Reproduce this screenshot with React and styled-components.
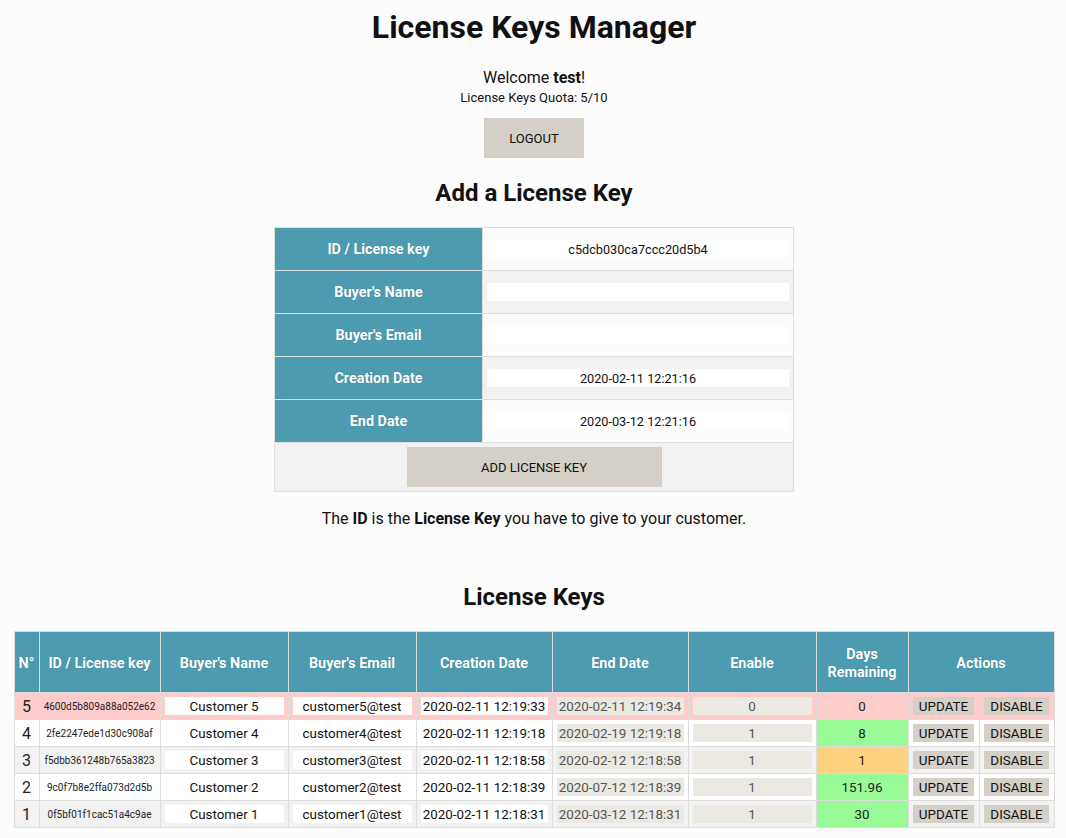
import React from 'react';
import styled, { createGlobalStyle } from 'styled-components';

const GlobalStyle = createGlobalStyle`
	body {
		margin: 0;
		background: #fcfcfc;
		font-family: Roboto, "Liberation Sans", sans-serif;
		color: #111;
	}
`;

const Page = styled.div`
	display: flex;
	flex-direction: column;
	align-items: center;
	padding: 0 0 10px 2px;
`;

const Title = styled.h1`
	margin: 9px 0 0;
	font-size: 32px;
	line-height: 37px;
	font-weight: 700;
`;

const Welcome = styled.div`
	margin-top: 22px;
	font-size: 16px;
	line-height: 19px;
`;

const Quota = styled.div`
	margin-top: 3px;
	font-size: 13px;
	line-height: 15px;
`;

const Button = styled.button`
	border: none;
	background: #d4cfc7;
	color: #111;
	font-family: Roboto, "Liberation Sans", sans-serif;
	font-size: ${p => (p.$small ? '13.4px' : '13px')};
	text-transform: uppercase;
	cursor: pointer;
	width: ${p => p.$width || 'auto'};
	height: ${p => p.$height || '18px'};
	padding: ${p => (p.$small ? '0 6px' : '0')};
	margin-top: ${p => p.$mt || '0'};
`;

const SubTitle = styled.h2`
	margin: ${p => p.$mt} 0 0;
	font-size: 24px;
	line-height: 28px;
	font-weight: 700;
`;

const FormTable = styled.table`
	margin-top: 20px;
	width: 520px;
	border-collapse: collapse;
	table-layout: fixed;
	border: 1px solid #ddd;

	tr:nth-child(odd) { background: #fcfcfc; }
	tr:nth-child(even) { background: #f2f2f2; }
`;

const Label = styled.th`
	width: 207px;
	height: 42px;
	padding: 0;
	background: #4d9bb0;
	color: #fff;
	font-size: 14.4px;
	font-weight: 700;
	text-shadow: 0 0 1px rgba(0, 0, 0, 0.25);
	border: 1px solid #ddd;
	border-left: none;
`;

const ValueCell = styled.td`
	padding: 0 4px;
	border: 1px solid #ddd;
`;

const Field = styled.input`
	display: block;
	box-sizing: border-box;
	width: 100%;
	height: 18px;
	border: none;
	padding: 0;
	outline: none;
	text-align: center;
	font-family: Roboto, "Liberation Sans", sans-serif;
	font-size: ${p => p.$size || '13.4px'};
	color: ${p => (p.$muted ? '#555' : '#111')};
	background: ${p => (p.$muted ? '#ebe9e2' : '#fff')};
`;

const ButtonCell = styled.td`
	padding: 4px 0 4px;
	text-align: center;
	background: #f2f2f2;
`;

const Note = styled.p`
	margin: 17px 0 0;
	font-size: 16px;
	line-height: 19px;
`;

const KeysTable = styled.table`
	margin-top: 20px;
	width: 1041px;
	border-collapse: collapse;
	table-layout: fixed;
	border: 1px solid #ddd;
`;

const Head = styled.th`
	background: #4d9bb0;
	color: #fff;
	font-size: 14.4px;
	font-weight: 700;
	line-height: 18px;
	height: 61px;
	box-sizing: border-box;
	padding: 3px ${p => (p.$tight ? '0' : '4px')} 0;
	text-shadow: 0 0 1px rgba(0, 0, 0, 0.25);
	border: 1px solid #ddd;
`;

const Row = styled.tr`
	background: ${p => (p.$expired ? '#ffcccc' : p.$odd ? '#f2f2f2' : '#fff')};
`;

const Cell = styled.td`
	height: 27px;
	padding: 0 ${p => (p.$tight ? '0' : '4px')};
	box-sizing: border-box;
	border: 1px solid #ddd;
	text-align: center;
	font-size: ${p => p.$size || '13.4px'};
	color: #222;
	background: ${p => p.$bg || 'transparent'};
`;

const keys = [
	{ n: 5, id: '4600d5b809a88a052e62', name: 'Customer 5', email: 'customer5@test', created: '2020-02-11 12:19:33', end: '2020-02-11 12:19:34', enable: 0, days: '0', expired: true },
	{ n: 4, id: '2fe2247ede1d30c908af', name: 'Customer 4', email: 'customer4@test', created: '2020-02-11 12:19:18', end: '2020-02-19 12:19:18', enable: 1, days: '8' },
	{ n: 3, id: 'f5dbb361248b765a3823', name: 'Customer 3', email: 'customer3@test', created: '2020-02-11 12:18:58', end: '2020-02-12 12:18:58', enable: 1, days: '1' },
	{ n: 2, id: '9c0f7b8e2ffa073d2d5b', name: 'Customer 2', email: 'customer2@test', created: '2020-02-11 12:18:39', end: '2020-07-12 12:18:39', enable: 1, days: '151.96' },
	{ n: 1, id: '0f5bf01f1cac51a4c9ae', name: 'Customer 1', email: 'customer1@test', created: '2020-02-11 12:18:31', end: '2020-03-12 12:18:31', enable: 1, days: '30' },
];

const daysColor = (k) => {
	if (k.expired) return 'transparent';
	if (Number(k.days) <= 1) return '#ffd280';
	return '#98fb98';
};

const formRows = [
	{ label: 'ID / License key', value: 'c5dcb030ca7ccc20d5b4' },
	{ label: "Buyer's Name", value: '' },
	{ label: "Buyer's Email", value: '' },
	{ label: 'Creation Date', value: '2020-02-11 12:21:16' },
	{ label: 'End Date', value: '2020-03-12 12:21:16' },
];

function App() {
	return (
		<Page>
			<GlobalStyle />
			<Title>License Keys Manager</Title>
			<Welcome>Welcome <b>test</b>!</Welcome>
			<Quota>License Keys Quota: 5/10</Quota>
			<Button $width="100px" $height="40px" $mt="13px">Logout</Button>

			<SubTitle $mt="21px">Add a License Key</SubTitle>
			<FormTable>
				<tbody>
					{formRows.map(r => (
						<tr key={r.label}>
							<Label>{r.label}</Label>
							<ValueCell>
								<Field $size="12.7px" defaultValue={r.value} />
							</ValueCell>
						</tr>
					))}
					<tr>
						<ButtonCell colSpan={2}>
							<Button $width="255px" $height="40px">Add License Key</Button>
						</ButtonCell>
					</tr>
				</tbody>
			</FormTable>
			<Note>The <b>ID</b> is the <b>License Key</b> you have to give to your customer.</Note>

			<SubTitle $mt="55px">License Keys</SubTitle>
			<KeysTable>
				<colgroup>
					<col style={{ width: 25 }} />
					<col style={{ width: 121 }} />
					<col style={{ width: 128 }} />
					<col style={{ width: 128 }} />
					<col style={{ width: 136 }} />
					<col style={{ width: 136 }} />
					<col style={{ width: 128 }} />
					<col style={{ width: 92 }} />
					<col style={{ width: 71 }} />
					<col style={{ width: 75 }} />
				</colgroup>
				<thead>
					<tr>
						<Head $tight>N°</Head>
						<Head>ID / License key</Head>
						<Head>Buyer's Name</Head>
						<Head>Buyer's Email</Head>
						<Head>Creation Date</Head>
						<Head>End Date</Head>
						<Head>Enable</Head>
						<Head>Days Remaining</Head>
						<Head colSpan={2}>Actions</Head>
					</tr>
				</thead>
				<tbody>
					{keys.map((k, i) => (
						<Row key={k.n} $expired={k.expired} $odd={i % 2 === 0}>
							<Cell $tight $size="16px">{k.n}</Cell>
							<Cell $tight $size="10px">{k.id}</Cell>
							<Cell><Field defaultValue={k.name} /></Cell>
							<Cell><Field defaultValue={k.email} /></Cell>
							<Cell><Field defaultValue={k.created} /></Cell>
							<Cell><Field $muted readOnly value={k.end} /></Cell>
							<Cell><Field $muted readOnly value={k.enable} /></Cell>
							<Cell $bg={daysColor(k)}>{k.days}</Cell>
							<Cell><Button $small>Update</Button></Cell>
							<Cell><Button $small>Disable</Button></Cell>
						</Row>
					))}
				</tbody>
			</KeysTable>
		</Page>
	);
}

export default App;
